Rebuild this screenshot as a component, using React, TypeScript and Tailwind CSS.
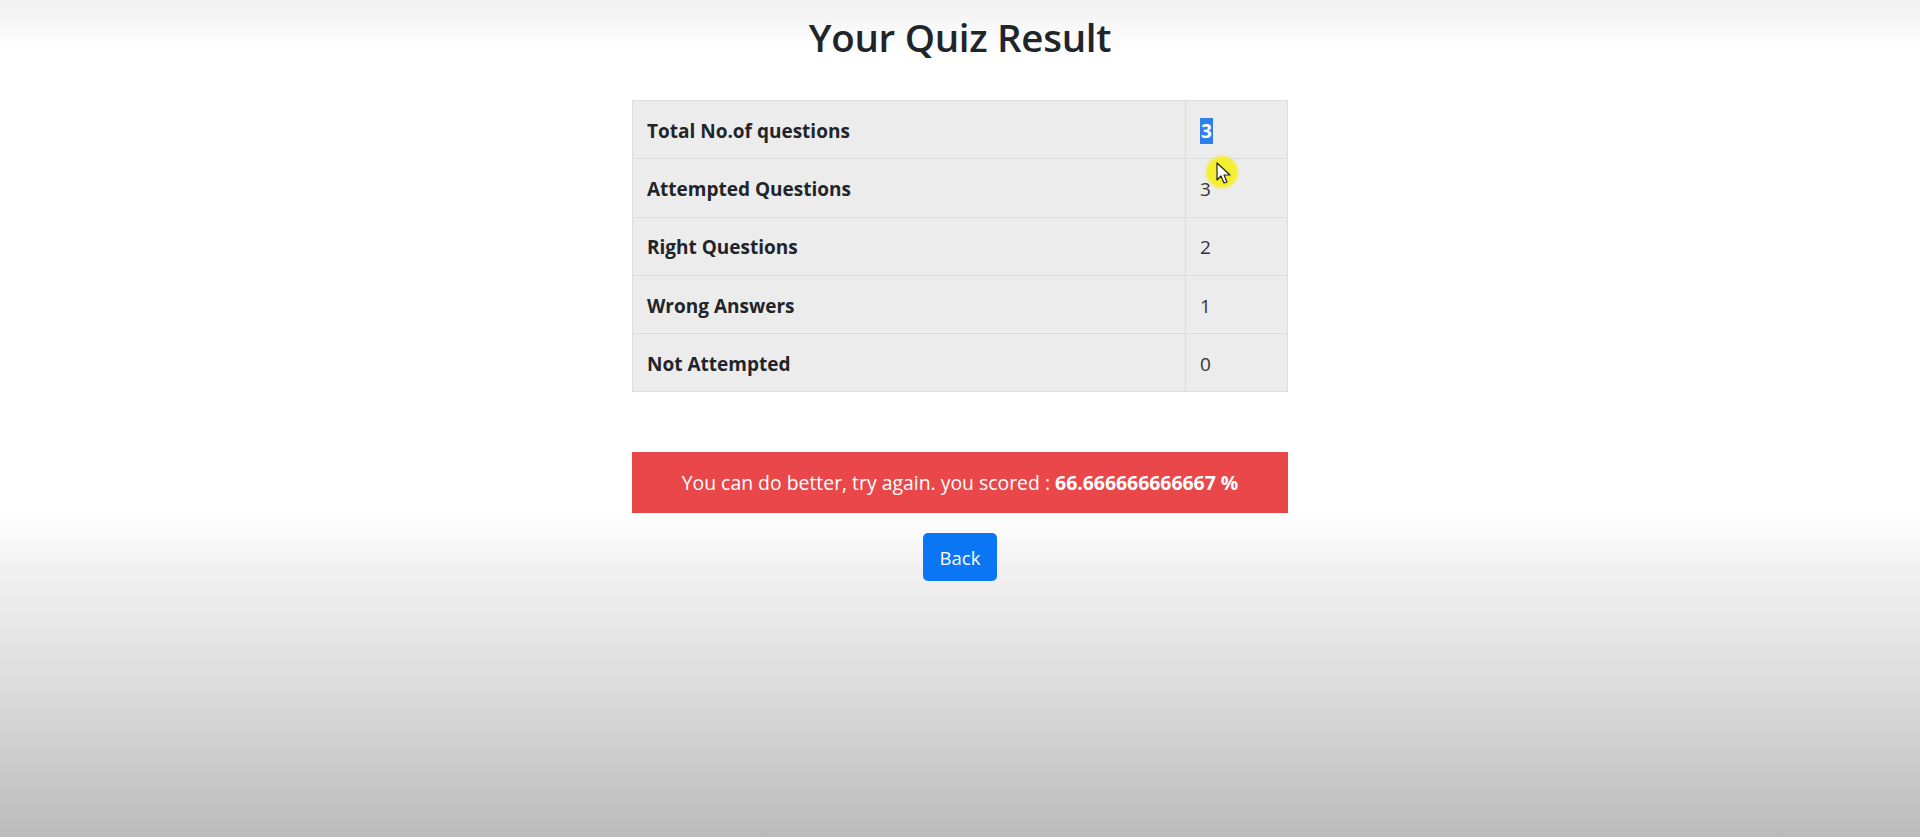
import React from 'react';

type Row = { label: string; value: string };

const rows: Row[] = [
    { label: "Total No.of questions", value: "3" },
    { label: "Attempted Questions", value: "3" },
    { label: "Right Questions", value: "2" },
    { label: "Wrong Answers", value: "1" },
    { label: "Not Attempted", value: "0" },
];

const Cursor: React.FC = () => (
    <div className="absolute left-[1206px] top-[156px] pointer-events-none">
        <div className="w-[32px] h-[32px] rounded-full bg-[#f5ee1c]/90 blur-[1px]" />
        <svg className="absolute left-[10px] top-[6px]" width="16" height="24" viewBox="0 0 16 24">
            <path d="M1 1 L1 18 L5 14 L8 21 L11 20 L8 13 L14 13 Z" fill="#ffffff" stroke="#222" strokeWidth="1.2" strokeLinejoin="round" />
        </svg>
    </div>
);

const App: React.FC = () => {
    return (
        <div
            className="relative w-full h-[837px] overflow-hidden text-[#212529] bg-[linear-gradient(to_bottom,#f0f0f0_0px,#ffffff_50px,#ffffff_515px,#f3f3f3_560px,#dddddd_680px,#bbbbbb_837px)]"
            style={{ fontFamily: '"Open Sans", "Noto Sans", sans-serif' }}
        >
            <div className="flex flex-col items-center">
                <h1 className="mt-[11px] text-[38.5px] leading-[52px] font-semibold tracking-[-0.3px]">Your Quiz Result</h1>

                <table className="mt-[37px] w-[656px] border-collapse bg-[#ececec] text-[19px]">
                    <tbody>
                        {rows.map((row, i) => (
                            <tr key={row.label}>
                                <td className="w-[553px] border border-[#dcdcdc] px-[14px] pt-[3px] h-[58.3px] font-bold">{row.label}</td>
                                <td className="border border-[#dcdcdc] px-[14px] pt-[3px] h-[58.3px] text-[#333]">
                                    {i === 0 ? (
                                        <span className="bg-[#2f7fe8] text-white font-bold px-[1px]">{row.value}</span>
                                    ) : (
                                        row.value
                                    )}
                                </td>
                            </tr>
                        ))}
                    </tbody>
                </table>

                <div className="mt-[60px] w-[656px] h-[61px] flex items-center justify-center bg-[#e9474a] text-white text-[19.4px]">
                    <span>
                        You can do better, try again. you scored : <b>66.666666666667 %</b>
                    </span>
                </div>

                <button className="mt-[20px] w-[74px] h-[48px] rounded-[5px] bg-[#0a76f3] text-white text-[18.5px]">
                    Back
                </button>
            </div>
            <Cursor />
        </div>
    );
};

export default App;
